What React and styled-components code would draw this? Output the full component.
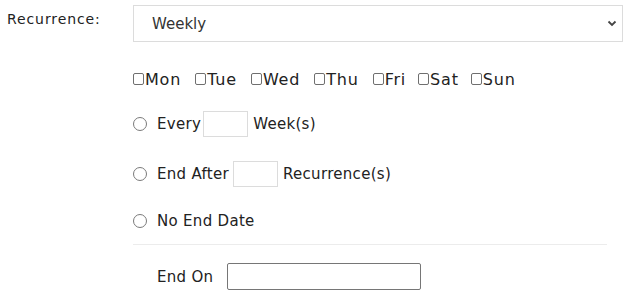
import React from 'react';
import styled, { createGlobalStyle } from 'styled-components';

const GlobalStyle = createGlobalStyle`
    body {
        margin: 0;
        background: #ffffff;
        font-family: "DejaVu Sans", "Noto Sans", sans-serif;
        color: #222222;
    }
`;

const Form = styled.div`
    display: grid;
    grid-template-columns: 126px 490px;
    padding: 5px 0 0 7px;
`;

const FieldLabel = styled.div`
    font-size: 14px;
    letter-spacing: 0.9px;
    line-height: 18px;
    padding-top: 5px;
    color: #222;
`;

const Content = styled.div`
    display: flex;
    flex-direction: column;
`;

const SelectWrap = styled.div`
    position: relative;
    width: 490px;
`;

const Select = styled.select`
    appearance: none;
    -webkit-appearance: none;
    width: 100%;
    height: 37px;
    box-sizing: border-box;
    border: 1px solid #dcdcdc;
    border-radius: 0;
    background: #fff;
    padding: 0 0 0 18px;
    font-family: inherit;
    font-size: 15px;
    color: #333;
    outline: none;
`;

const Chevron = styled.svg`
    position: absolute;
    right: 6px;
    top: 15px;
    pointer-events: none;
`;

const DaysRow = styled.div`
    display: flex;
    align-items: center;
    height: 20px;
    margin-top: 27px;
`;

const Day = styled.label`
    display: flex;
    align-items: center;
    font-size: 16px;
    letter-spacing: 0.8px;
    margin-right: ${({ $gap }) => $gap}px;
    color: #222;
`;

const Box = styled.input.attrs({ type: 'checkbox' })`
    appearance: none;
    -webkit-appearance: none;
    width: 11px;
    height: 12px;
    margin: 0 1px 0 0;
    border: 1px solid #6f6f6f;
    border-radius: 2px;
    box-sizing: border-box;
    background: #fff;
`;

const RadioRow = styled.div`
    display: flex;
    align-items: center;
    min-height: 26px;
    margin-top: ${({ $top }) => $top}px;
    font-size: 15px;
    letter-spacing: 0.3px;
`;

const Radio = styled.input.attrs({ type: 'radio' })`
    appearance: none;
    -webkit-appearance: none;
    width: 14px;
    height: 14px;
    margin: 0 10px 0 0;
    border: 1px solid #7a7a7a;
    border-radius: 50%;
    box-sizing: border-box;
    background: #fff;
`;

const SmallInput = styled.input`
    width: 45px;
    height: 26px;
    box-sizing: border-box;
    border: 1px solid #dcdcdc;
    margin: 0 5px 0 ${({ $left }) => $left}px;
    padding: 0;
    outline: none;
`;

const Divider = styled.hr`
    width: 474px;
    margin: 10px 0 0 0;
    border: none;
    border-top: 1px solid #ececec;
`;

const EndOnRow = styled.div`
    display: flex;
    align-items: center;
    margin-top: 18px;
    padding-left: 24px;
    font-size: 15px;
    letter-spacing: 0.3px;
`;

const DateInput = styled.input`
    width: 194px;
    height: 27px;
    box-sizing: border-box;
    border: 1px solid #767676;
    border-radius: 2px;
    margin-left: 14px;
    padding: 0 4px;
    outline: none;
`;

const days = [
    { name: 'Mon', gap: 14 },
    { name: 'Tue', gap: 14 },
    { name: 'Wed', gap: 14 },
    { name: 'Thu', gap: 14 },
    { name: 'Fri', gap: 12 },
    { name: 'Sat', gap: 12 },
    { name: 'Sun', gap: 0 },
];

const App = () => {
    return (
        <>
            <GlobalStyle />
            <Form>
                <FieldLabel>Recurrence:</FieldLabel>
                <Content>
                    <SelectWrap>
                        <Select defaultValue="weekly">
                            <option value="daily">Daily</option>
                            <option value="weekly">Weekly</option>
                            <option value="monthly">Monthly</option>
                        </Select>
                        <Chevron width="10" height="7" viewBox="0 0 10 7">
                            <path d="M1.5 1.5 L5 5 L8.5 1.5" fill="none" stroke="#444" strokeWidth="1.8" />
                        </Chevron>
                    </SelectWrap>

                    <DaysRow>
                        {days.map((d) => (
                            <Day key={d.name} $gap={d.gap}>
                                <Box />
                                {d.name}
                            </Day>
                        ))}
                    </DaysRow>

                    <RadioRow $top={22}>
                        <Radio name="end" />
                        Every
                        <SmallInput $left={2} />
                        Week(s)
                    </RadioRow>

                    <RadioRow $top={24}>
                        <Radio name="end" />
                        End After
                        <SmallInput $left={4} />
                        Recurrence(s)
                    </RadioRow>

                    <RadioRow $top={21}>
                        <Radio name="end" />
                        No End Date
                    </RadioRow>

                    <Divider />

                    <EndOnRow>
                        End On
                        <DateInput />
                    </EndOnRow>
                </Content>
            </Form>
        </>
    );
};

export default App;
